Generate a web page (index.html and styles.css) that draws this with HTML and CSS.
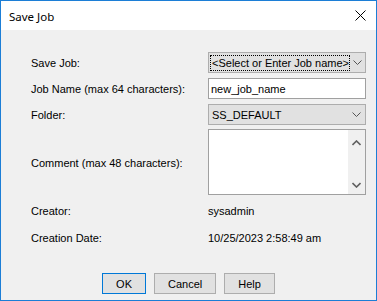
FILE: index.html
```html
<!DOCTYPE html>
<html>
<head>
<meta charset="utf-8">
<link rel="stylesheet" href="styles.css">
</head>
<body>
<div class="window">
  <div class="titlebar">
    <span class="title">Save Job</span>
    <span class="close">
      <svg width="11" height="11" viewBox="0 0 11 11"><path d="M0.5 0.5 L10.5 10.5 M10.5 0.5 L0.5 10.5" stroke="#000" stroke-width="1" fill="none"/></svg>
    </span>
  </div>
  <div class="content">
    <div class="form">
      <div class="label">Save Job:</div>
      <div class="combo">
        <span class="combo-text focus">&lt;Select or Enter Job name&gt;</span>
        <span class="chev"><svg width="9" height="5" viewBox="0 0 9 5"><path d="M0.5 0.5 L4.5 4.5 L8.5 0.5" stroke="#555" fill="none"/></svg></span>
      </div>

      <div class="label">Job Name (max 64 characters):</div>
      <div class="input">new_job_name</div>

      <div class="label">Folder:</div>
      <div class="combo">
        <span class="combo-text">SS_DEFAULT</span>
        <span class="chev"><svg width="9" height="5" viewBox="0 0 9 5"><path d="M0.5 0.5 L4.5 4.5 L8.5 0.5" stroke="#555" fill="none"/></svg></span>
      </div>

      <div class="label">Comment (max 48 characters):</div>
      <div class="textarea">
        <div class="ta-body"></div>
        <div class="scrollbar">
          <svg width="9" height="6" viewBox="0 0 9 6"><path d="M0.5 5 L4.5 1 L8.5 5" stroke="#606060" stroke-width="1.6" fill="none"/></svg>
          <svg width="9" height="6" viewBox="0 0 9 6"><path d="M0.5 1 L4.5 5 L8.5 1" stroke="#606060" stroke-width="1.6" fill="none"/></svg>
        </div>
      </div>

      <div class="label">Creator:</div>
      <div class="value">sysadmin</div>

      <div class="label">Creation Date:</div>
      <div class="value">10/25/2023 2:58:49 am</div>
    </div>
    <div class="buttons">
      <div class="btn default">OK</div>
      <div class="btn">Cancel</div>
      <div class="btn">Help</div>
    </div>
  </div>
</div>
</body>
</html>
```

FILE: styles.css
```css
html, body {
  margin: 0;
  padding: 0;
  background: #f0f0f0;
}
.window {
  width: 377px;
  height: 301px;
  box-sizing: border-box;
  border: 1px solid #1c7ed6;
  background: #f0f0f0;
  display: flex;
  flex-direction: column;
  font-family: "Liberation Sans", Arial, sans-serif;
  font-size: 11px;
  color: #000;
}
.titlebar {
  height: 29px;
  background: #fff;
  display: flex;
  align-items: center;
  justify-content: space-between;
  padding: 0 10px 0 8px;
  flex-shrink: 0;
}
.title {
  font-family: "Noto Sans", "Open Sans", sans-serif;
  font-size: 11.5px;
  margin-top: 1px;
}
.close {
  display: flex;
  width: 11px;
  height: 11px;
}
.content {
  flex: 1;
  display: flex;
  flex-direction: column;
  padding: 22px 10px 0 30px;
}
.form {
  display: grid;
  grid-template-columns: 177px 158px;
  grid-template-rows: 21px 21px 21px 65px 22px 22px;
  row-gap: 5px;
}
.label {
  display: flex;
  align-items: center;
  white-space: nowrap;
}
.combo {
  box-sizing: border-box;
  border: 1px solid #adadad;
  background: #e1e1e1;
  display: flex;
  align-items: center;
  padding: 0 0 0 1px;
}
.combo-text {
  flex: 1;
  padding: 1px 1px 1px 2px;
  white-space: nowrap;
  margin-right: 3px;
}
.combo-text.focus {
  outline: 1px dotted #000;
  outline-offset: -1px;
  padding: 2px 1px 2px 2px;
}
.chev {
  width: 14px;
  display: flex;
  justify-content: center;
  padding-right: 2px;
}
.input {
  box-sizing: border-box;
  border: 1px solid #a0a0a0;
  background: #fff;
  display: flex;
  align-items: center;
  padding-left: 2px;
}
.textarea {
  box-sizing: border-box;
  border: 1px solid #a0a0a0;
  background: #fff;
  display: flex;
  margin-top: -1px;
}
.ta-body {
  flex: 1;
}
.scrollbar {
  width: 17px;
  background: #f0f0f0;
  display: flex;
  flex-direction: column;
  justify-content: space-between;
  align-items: center;
  padding: 10px 0 6px;
}
.value {
  display: flex;
  align-items: center;
}
.buttons {
  display: flex;
  justify-content: center;
  gap: 8px;
  margin-top: 24px;
  margin-left: -20px;
}
.btn {
  box-sizing: border-box;
  height: 21px;
  padding: 0 13px;
  border: 1px solid #adadad;
  background: #e1e1e1;
  display: flex;
  align-items: center;
  justify-content: center;
}
.btn.default {
  border-color: #0078d7;
}
```
